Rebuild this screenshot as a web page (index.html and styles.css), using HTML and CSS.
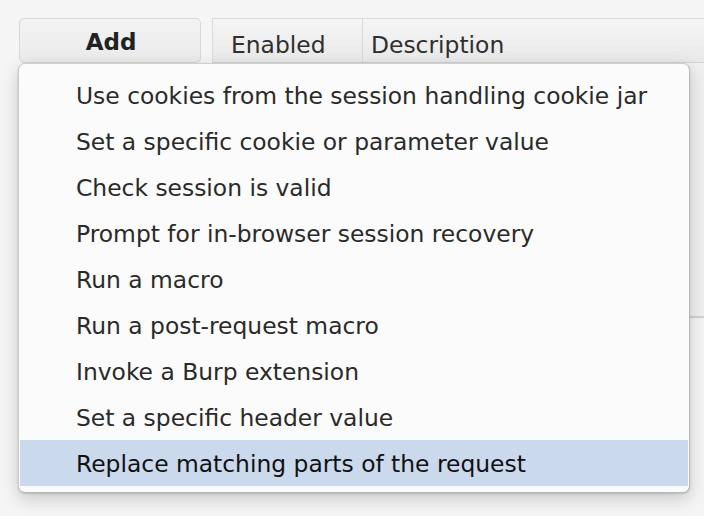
FILE: index.html
```html
<!DOCTYPE html>
<html>
<head>
<meta charset="utf-8">
<link rel="stylesheet" href="styles.css">
</head>
<body>
<div class="page">
  <div class="toolbar">
    <button class="add-btn">Add</button>
    <div class="table">
      <div class="thead">
        <div class="th th-enabled">Enabled</div>
        <div class="th th-desc">Description</div>
      </div>
      <div class="tbody"></div>
    </div>
  </div>
  <div class="menu">
    <div class="item">Use cookies from the session handling cookie jar</div>
    <div class="item">Set a specific cookie or parameter value</div>
    <div class="item">Check session is valid</div>
    <div class="item">Prompt for in-browser session recovery</div>
    <div class="item">Run a macro</div>
    <div class="item">Run a post-request macro</div>
    <div class="item">Invoke a Burp extension</div>
    <div class="item">Set a specific header value</div>
    <div class="item selected">Replace matching parts of the request</div>
  </div>
</div>
</body>
</html>
```
FILE: styles.css
```css
html, body {
  margin: 0;
  padding: 0;
  background: #f5f5f5;
  font-family: "DejaVu Sans", sans-serif;
  font-size: 23.4px;
  color: #2b2b2b;
}
.page {
  position: relative;
  width: 704px;
  height: 516px;
  overflow: hidden;
}
.toolbar {
  display: flex;
  align-items: flex-start;
  padding-top: 18px;
  padding-left: 19px;
  gap: 11px;
}
.add-btn {
  width: 182px;
  height: 45px;
  border: 1px solid #d6d6d6;
  border-radius: 5px;
  background: linear-gradient(#f3f3f3, #ebebeb);
  font-family: "DejaVu Sans", sans-serif;
  font-size: 23px;
  font-weight: bold;
  color: #222;
  padding: 3px 0 0 2px;
  flex: none;
}
.table {
  flex: 1;
  display: flex;
  flex-direction: column;
}
.thead {
  display: flex;
  border-top: 1px solid #dadada;
  border-left: 1px solid #dadada;
  border-bottom: 1px solid #d2d2d2;
  background: linear-gradient(#f5f5f5, #e9e9e9);
  box-sizing: border-box;
  height: 45px;
}
.th {
  display: flex;
  align-items: center;
  padding-top: 8px;
  box-sizing: border-box;
  color: #2f2f2f;
}
.th-enabled {
  width: 150px;
  padding-left: 18px;
  border-right: 1px solid #d8d8d8;
}
.th-desc {
  padding-left: 8px;
}
.tbody {
  height: 253px;
  background: #f0f0f0;
  border-bottom: 2px solid #d2d2d2;
}
.menu {
  position: absolute;
  left: 18px;
  top: 63px;
  width: 672px;
  box-sizing: border-box;
  background: #fbfbfb;
  border: 1px solid #b9b9b9;
  border-top-color: #d0d0d0;
  border-left-color: #c8c8c8;
  border-radius: 7px;
  padding: 8px 1px 6px 1px;
  box-shadow: 0 6px 18px rgba(0, 0, 0, 0.18), 0 1px 2px rgba(0, 0, 0, 0.15);
}
.item {
  height: 46px;
  line-height: 46px;
  padding-left: 56px;
  padding-top: 1px;
  box-sizing: border-box;
  white-space: nowrap;
  color: #2a2a2a;
}
.item.selected {
  background: #cbd9ec;
  color: #111;
}
```
